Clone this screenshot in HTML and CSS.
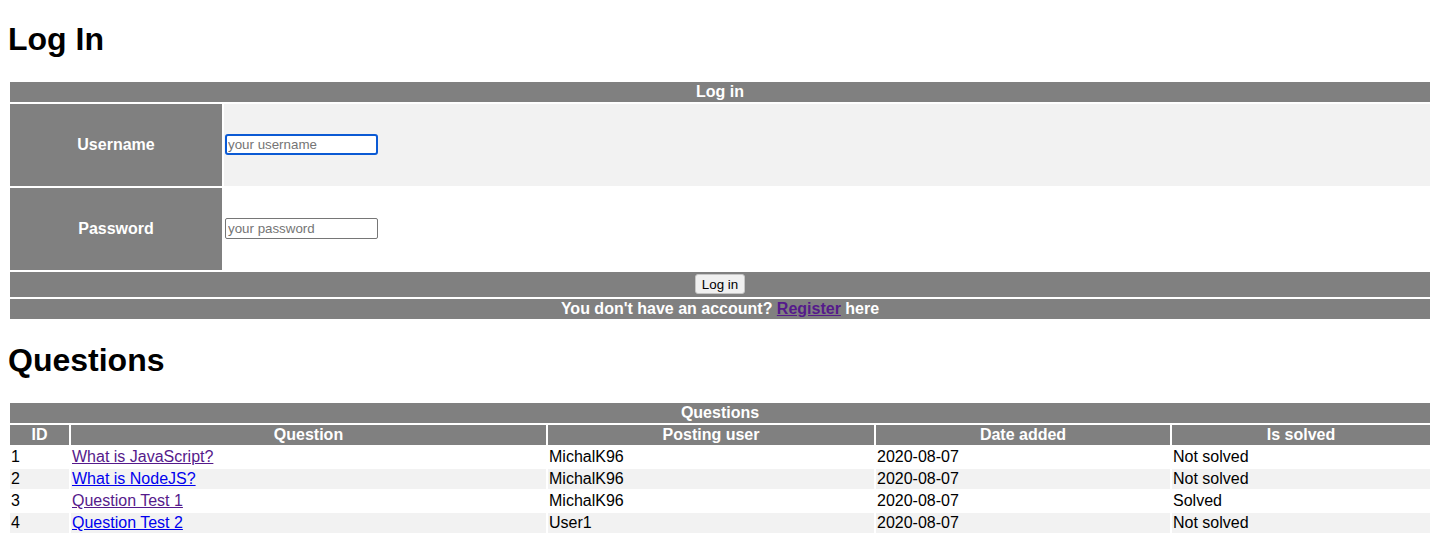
FILE: index.html
```html
<!DOCTYPE html>
<html lang="en">
<head>
<meta charset="utf-8">
<title>Log In</title>
<link rel="stylesheet" href="styles.css">
</head>
<body>
<h1>Log In</h1>
<table class="grid login">
  <tr><th colspan="2">Log in</th></tr>
  <tr>
    <th class="label">Username</th>
    <td><input class="field focused" type="text" placeholder="your username"></td>
  </tr>
  <tr>
    <th class="label">Password</th>
    <td><input class="field" type="password" placeholder="your password"></td>
  </tr>
  <tr><th colspan="2" class="actions"><button class="btn" type="button">Log in</button></th></tr>
  <tr><th colspan="2">You don't have an account? <a class="visited" href="#register">Register</a> here</th></tr>
</table>

<h1>Questions</h1>
<table class="grid questions">
  <tr><th colspan="5">Questions</th></tr>
  <tr>
    <th class="c-id">ID</th>
    <th class="c-q">Question</th>
    <th class="c-user">Posting user</th>
    <th class="c-date">Date added</th>
    <th class="c-solved">Is solved</th>
  </tr>
  <tr><td>1</td><td><a class="visited" href="#q1">What is JavaScript?</a></td><td>MichalK96</td><td>2020-08-07</td><td>Not solved</td></tr>
  <tr><td>2</td><td><a href="#q2">What is NodeJS?</a></td><td>MichalK96</td><td>2020-08-07</td><td>Not solved</td></tr>
  <tr><td>3</td><td><a class="visited" href="#q3">Question Test 1</a></td><td>MichalK96</td><td>2020-08-07</td><td>Solved</td></tr>
  <tr><td>4</td><td><a href="#q4">Question Test 2</a></td><td>User1</td><td>2020-08-07</td><td>Not solved</td></tr>
</table>
</body>
</html>
```
FILE: styles.css
```css
body {
  margin: 0 8px 8px;
  font-family: "Liberation Sans", Arial, Helvetica, sans-serif;
  font-size: 16px;
  color: #000;
  background: #fff;
}

h1 {
  font-size: 32px;
  font-weight: bold;
  margin: 21.44px 0;
}

.grid {
  width: 100%;
  border-spacing: 2px;
  border-collapse: separate;
}

.grid th,
.grid td {
  padding: 1px;
  box-sizing: border-box;
}

.grid th {
  background: #808080;
  color: #fff;
  font-weight: bold;
  text-align: center;
}

.grid td {
  text-align: left;
}

.grid tr:nth-child(even) td {
  background: #f2f2f2;
}

.login .label {
  width: 212px;
  height: 82px;
}

.login .actions {
  height: 25px;
}

.field {
  box-sizing: border-box;
  width: 153px;
  height: 21px;
  margin: 0;
  padding: 1px 2px;
  border: 1px solid #767676;
  border-radius: 2px;
  background: #fff;
  font-family: "Liberation Sans", Arial, sans-serif;
  font-size: 13.33px;
  color: #000;
  vertical-align: middle;
}

.field::placeholder {
  color: #757575;
}

.field.focused {
  border: 2px solid #0b5ad4;
  border-radius: 3px;
  padding: 0 1px;
}

.btn {
  box-sizing: border-box;
  width: 50px;
  height: 20px;
  margin: 1px 0;
  padding: 0;
  border: 1px solid #c6c6c6;
  border-radius: 3px;
  background: #f0f0f0;
  color: #000;
  font-family: "Liberation Sans", Arial, sans-serif;
  font-size: 13.33px;
  white-space: nowrap;
  vertical-align: middle;
}

a {
  color: #0000ee;
  text-decoration: underline;
}

a.visited {
  color: #551a8b;
}

.questions .c-id { width: 59px; }
.questions .c-q { width: 475px; }
.questions .c-user { width: 326px; }
.questions .c-date { width: 294px; }
.questions .c-solved { width: 258px; }
```
